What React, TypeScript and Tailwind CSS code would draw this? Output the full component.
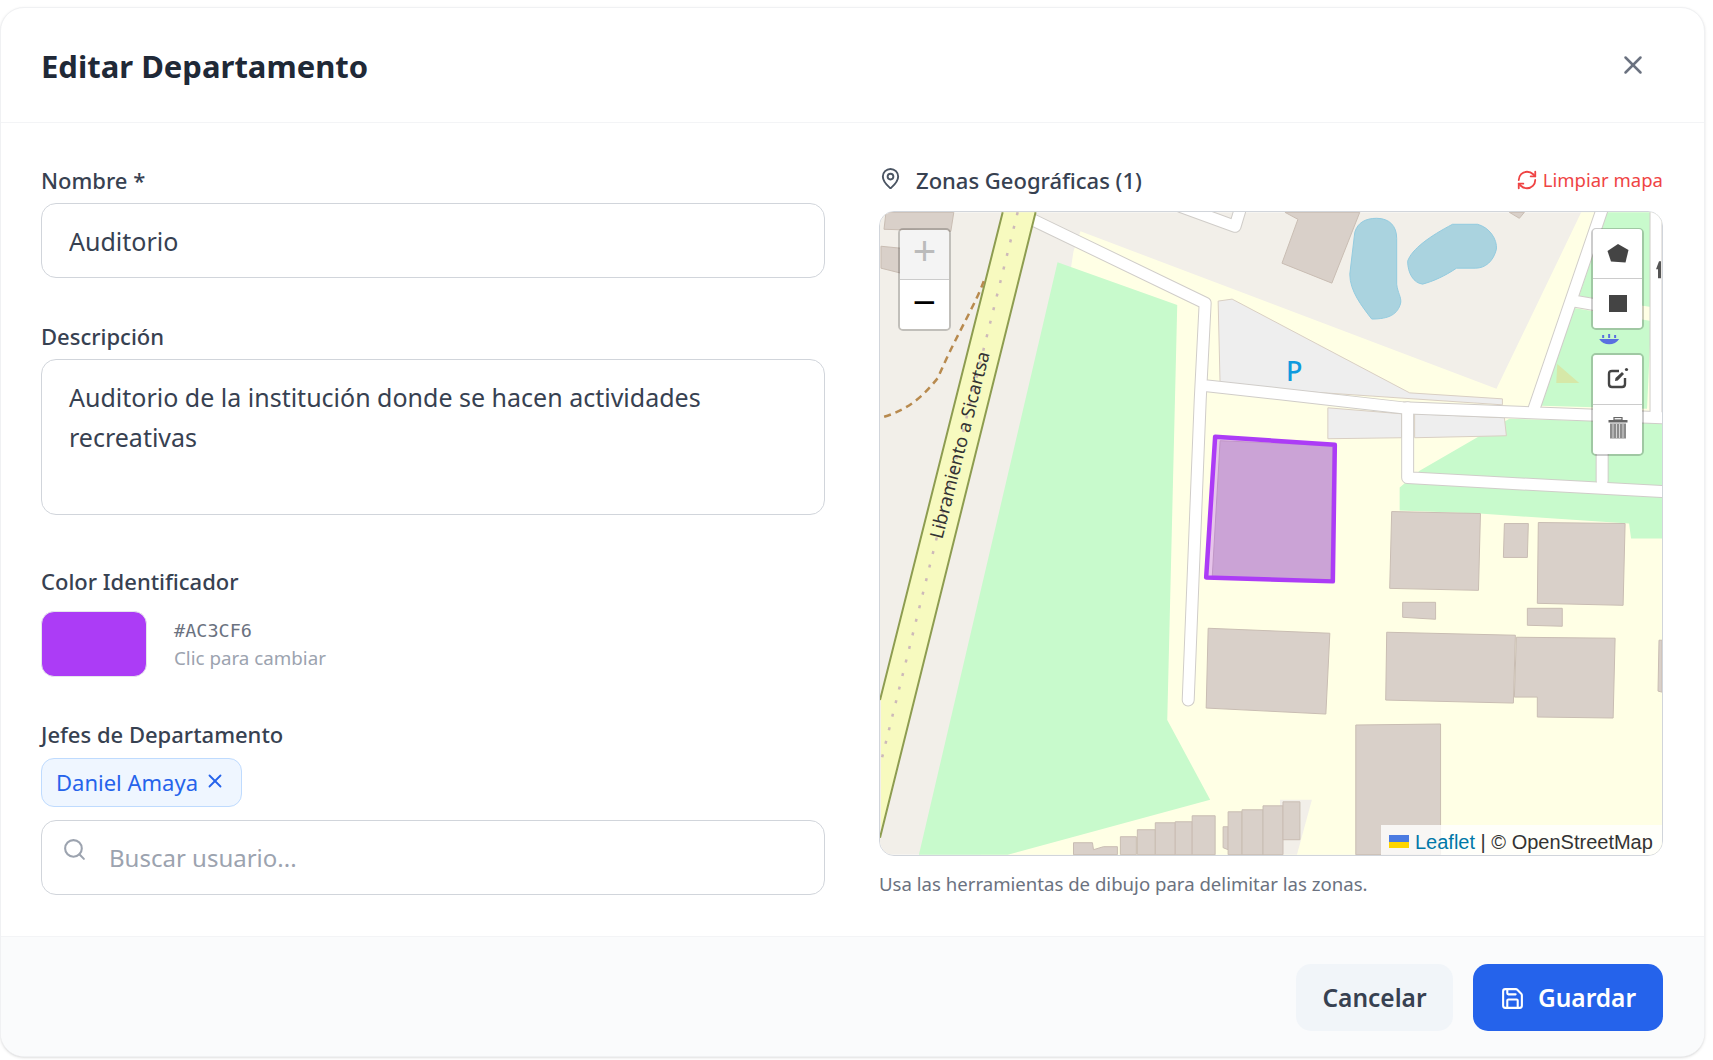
import { MapPin, RefreshCw, Save, Search, X } from "lucide-react";

const font = { fontFamily: '"Noto Sans", sans-serif' };

const buildings = [
  "885,211 953,211 950,230 883,228",
  "880,245 900,247 900,272 880,267",
  "1285,211 1360,211 1332,282 1282,262 1298,218",
  "1510,211 1525,211 1520,217",
  "1220,440 1333,445 1331,580 1212,578",
  "1392,511 1481,513 1479,590 1390,588",
  "1505,523 1529,523 1528,557 1504,557",
  "1539,522 1626,523 1624,605 1538,603",
  "1403,602 1436,602 1436,619 1403,617",
  "1528,608 1563,608 1563,626 1528,625",
  "1387,632 1516,635 1514,703 1386,700",
  "1517,637 1616,638 1614,718 1538,717 1538,697 1515,697",
  "1660,640 1663,640 1663,692 1659,691",
  "1208,628 1330,633 1326,714 1206,708",
  "1356,725 1441,724 1441,855 1356,855",
  "1073,843 1092,843 1093,850 1103,847 1117,847 1117,855 1073,855",
  "1120,837 1136,837 1136,855 1120,855",
  "1137,830 1155,830 1155,855 1137,855",
  "1155,823 1175,823 1175,855 1155,855",
  "1175,822 1192,822 1192,855 1175,855",
  "1192,816 1215,816 1215,855 1192,855",
  "1223,827 1228,827 1228,850 1223,848",
  "1228,812 1242,812 1242,855 1228,855",
  "1242,810 1263,810 1263,855 1242,855",
  "1263,806 1283,806 1283,855 1263,855",
  "1283,802 1300,802 1300,840 1283,840",
];

const parking = [
  "1218,300 1232,298 1410,392 1503,398 1503,404 1220,385",
  "1328,407 1402,413 1402,437 1328,438",
  "1415,413 1505,417 1507,435 1415,437",
];

const greens = [
  "1057,261 1177,304 1167,720 1210,800 1007,855 918,855",
  "1607,211 1652,211 1652,306 1580,295",
  "1575,307 1652,320 1648,408 1542,405",
  "1510,418 1663,422 1663,538 1632,538 1630,523 1480,513 1400,510 1400,487 1420,470",
];

const paths = [
  "M1033,219 L1205,302 L1200,400 L1188,700",
  "M1207,385 L1280,393 L1403,407 L1663,417",
  "M1408,407 L1408,477 L1663,491",
  "M1604,205 L1535,407",
  "M1575,300 L1610,306",
  "M1657,205 L1657,412",
  "M1603,417 L1603,480",
  "M1180,205 L1235,225 L1241,205",
];

function MapTiles() {
  return (
    <svg viewBox="879 211 784 644" className="block w-full h-full">
      <rect x="879" y="211" width="784" height="644" fill="#f2efe9" />
      <polygon points="1073,250 1080,230 1497,388 1582,211 1663,211 1663,855 980,855" fill="#ffffe5" />
      <polygon points="1280,855 1280,800 1312,800 1297,855" fill="#f2efe9" />
      {greens.map((p) => (
        <polygon key={p} points={p} fill="#c8facc" />
      ))}
      <polygon points="1558,363 1557,382 1580,382" fill="#d6e8a8" />
      {parking.map((p) => (
        <polygon key={p} points={p} fill="#eeeeee" stroke="#d9cfc3" strokeWidth="1" />
      ))}
      {/* water */}
      <path
        d="M1377,217 C1390,217 1397,225 1397,237 L1397,283 C1398,292 1402,296 1401,302 C1398,313 1390,318 1372,318 C1362,305 1350,290 1350,273 L1355,231 C1358,221 1366,217 1377,217 Z"
        fill="#aad3df"
        stroke="#93cbdf"
        strokeWidth="1"
      />
      <path
        d="M1408,260 C1412,248 1430,235 1453,223 L1478,223 C1490,226 1498,238 1497,248 C1494,260 1486,267 1476,267 L1457,267 C1445,275 1434,280 1423,283 C1414,282 1408,272 1408,260 Z"
        fill="#aad3df"
        stroke="#93cbdf"
        strokeWidth="1"
      />
      {buildings.map((p) => (
        <polygon key={p} points={p} fill="#d9d0c9" stroke="#c9bdb3" strokeWidth="1" />
      ))}
      {/* white service roads */}
      {paths.map((d) => (
        <path key={d} d={d} fill="none" stroke="#d0cdc9" strokeWidth="13" strokeLinecap="round" strokeLinejoin="round" />
      ))}
      {paths.map((d) => (
        <path key={d} d={d} fill="none" stroke="#ffffff" strokeWidth="11" strokeLinecap="round" strokeLinejoin="round" />
      ))}
      {/* main road */}
      <polygon points="1002,211 1035,211 880,835 880,697" fill="#f7fabf" />
      <path d="M1002,211 L879,700 M1035,211 L879,838" stroke="#8d9c50" strokeWidth="2" fill="none" />
      <path d="M1017,211 L879,766" stroke="#cdb9b9" strokeWidth="2.5" strokeDasharray="3 11" fill="none" />
      <path
        d="M983,280 C975,303 955,335 937,377 C925,392 910,408 883,416"
        stroke="#b88a4e"
        strokeWidth="2.5"
        strokeDasharray="7 5"
        fill="none"
      />
      <text
        x="958"
        y="444"
        transform="rotate(-75.7 958 444)"
        textAnchor="middle"
        dominantBaseline="central"
        fontSize="18.5"
        fill="#333333"
        style={font}
      >
        Libramiento a Sicartsa
      </text>
      <text x="1286" y="380" fontSize="27" fontWeight="500" fill="#0f9ade" style={font}>
        P
      </text>
      {/* fountain + arrow hidden behind the toolbar */}
      <path d="M1600,338 C1604,345 1616,345 1620,338 Z" fill="#5a6fe0" />
      <path d="M1604,334 L1604,337 M1610,333 L1610,337 M1616,334 L1616,337" stroke="#5a6fe0" strokeWidth="2" />
      <path d="M1660,260 L1657,268 L1659,268 L1659,277 L1662,277 L1662,260 Z" fill="#555555" />
      {/* drawn zone */}
      <polygon
        points="1215,436 1335,444 1333,581 1206,577"
        fill="#ac3cf6"
        fillOpacity="0.3"
        stroke="#ac3cf6"
        strokeWidth="4.5"
        strokeLinejoin="round"
      />
    </svg>
  );
}

function Label({ children, className }: { children: React.ReactNode; className?: string }) {
  return <label className={`block h-[24px] leading-[22px] text-[22px] font-medium text-[#374151] ${className}`}>{children}</label>;
}

function MapControls() {
  return (
    <>
      <div className="absolute left-[18px] top-[16px] w-[53px] rounded-[5px] border-[2.5px] border-[#00000033] bg-clip-padding">
        <div
          className="h-[50px] flex items-center justify-center bg-[#f4f4f4] text-[#bbbbbb] rounded-t-[3px] border-b border-[#cccccc] text-[40px]"
          style={{ fontFamily: '"Liberation Mono", monospace' }}
        >
          +
        </div>
        <div
          className="h-[49px] flex items-center justify-center bg-white text-black rounded-b-[3px] text-[40px] pt-[3px]"
          style={{ fontFamily: '"Liberation Mono", monospace' }}
        >
          −
        </div>
      </div>
      <div className="absolute right-[18px] top-[16px] w-[53px] rounded-[5px] border-[2.5px] border-[#00000033] bg-clip-padding">
        <div className="h-[50px] flex items-center justify-center bg-white rounded-t-[3px] border-b border-[#cccccc] -mt-[1px]">
          <svg width="22" height="20" viewBox="0 0 22 20">
            <polygon points="11,0 21.5,6 18.5,18.5 4,17.5 0.5,7" fill="#444444" />
          </svg>
        </div>
        <div className="h-[49px] flex items-center justify-center bg-white rounded-b-[3px]">
          <div className="w-[18px] h-[17px] bg-[#444444]" />
        </div>
      </div>
      <div className="absolute right-[18px] top-[141px] w-[53px] rounded-[5px] border-[2.5px] border-[#00000033] bg-clip-padding">
        <div className="h-[50px] flex items-center justify-center bg-white rounded-t-[3px] border-b border-[#cccccc]">
          <svg width="22" height="22" viewBox="0 0 22 22" fill="none" className="-mt-[3px]">
            <path d="M12,4 H5 Q2,4 2,7 V17 Q2,20 5,20 H15 Q18,20 18,17 V11" stroke="#444444" strokeWidth="2.4" />
            <path d="M8,14 L8.5,11 L15,5 L17,7 L10.8,13.5 Z" fill="#444444" />
            <circle cx="19.5" cy="2.5" r="1.6" fill="#444444" />
          </svg>
        </div>
        <div className="h-[49px] flex items-center justify-center bg-white rounded-b-[3px]">
          <svg width="20" height="22" viewBox="0 0 20 22" className="-mt-[3px]">
            <rect x="0.5" y="3" width="19" height="2.5" fill="#666666" />
            <rect x="6" y="0.5" width="8" height="2.5" fill="none" stroke="#666666" strokeWidth="1.2" />
            <rect x="2" y="6.5" width="16" height="15" fill="#8c8c8c" />
            <path d="M5,7 V21 M8.5,7 V21 M11.5,7 V21 M15,7 V21" stroke="#d6d6d6" strokeWidth="1" />
          </svg>
        </div>
      </div>
      <div
        className="absolute right-0 bottom-0 h-[30px] w-[281px] flex items-center pl-[8px] pt-[3px] gap-[6px] bg-[#ffffffcc] text-[20px] text-[#333333] rounded-br-[14px] whitespace-nowrap"
        style={{ fontFamily: '"Liberation Sans", sans-serif' }}
      >
        <span className="flex flex-col w-[20px] h-[13px]">
          <span className="h-[6.5px] bg-[#4c7be1]" />
          <span className="h-[6.5px] bg-[#ffd500]" />
        </span>
        <span>
          <span className="text-[#0078a8]">Leaflet</span> | © OpenStreetMap
        </span>
      </div>
    </>
  );
}

export default function App() {
  return (
    <div className="w-full h-screen bg-white pt-[7px] pr-[8px] pb-[3px]" style={font}>
      <div className="h-full flex flex-col rounded-[24px] border border-[#f0f1f3] bg-white overflow-hidden shadow-sm">
        {/* Header */}
        <div className="h-[115px] shrink-0 flex items-center justify-between pl-[40px] pr-[56px] border-b border-[#f3f4f6]">
          <h2 className="text-[31px] font-bold text-[#1f2937] leading-none mt-[3px]">Editar Departamento</h2>
          <X className="w-[30px] h-[30px] text-[#6b7280]" strokeWidth={2} />
        </div>

        {/* Body */}
        <div className="flex-1 grid grid-cols-2 gap-[54px] pl-[40px] pr-[41px] pt-[46px]">
          <div>
            <Label>Nombre *</Label>
            <input
              readOnly
              value="Auditorio"
              className="mt-[10px] w-full h-[75px] rounded-[15px] border border-[#d1d5db] pl-[27px] pr-[26px] text-[25px] text-[#374151] outline-none"
            />
            <Label className="mt-[47px]">Descripción</Label>
            <textarea
              readOnly
              value="Auditorio de la institución donde se hacen actividades recreativas"
              className="mt-[10px] block w-full h-[156px] rounded-[15px] border border-[#d1d5db] pl-[27px] pr-[26px] py-[17px] text-[25px] leading-[40px] text-[#374151] outline-none resize-none"
            />
            <Label className="mt-[55px]">Color Identificador</Label>
            <div className="mt-[17px] flex items-center gap-[27px]">
              <div className="w-[106px] h-[66px] rounded-[13px] bg-[#ac3cf6] border border-[#e5e7eb]" />
              <div>
                <div className="text-[18.5px] leading-[28px] text-[#6b7280]" style={{ fontFamily: '"DejaVu Sans Mono", monospace' }}>
                  #AC3CF6
                </div>
                <div className="text-[18.75px] leading-[26px] text-[#9ca3af]">Clic para cambiar</div>
              </div>
            </div>
            <Label className="mt-[46px]">Jefes de Departamento</Label>
            <div className="mt-[11px] flex items-center gap-[6px] h-[49px] w-[201px] rounded-[13px] border border-[#bfdbfe] bg-[#eff6ff] pl-[14px] text-[22px] text-[#2563eb]">
              Daniel Amaya
              <X className="w-[22px] h-[22px] -mt-[4px]" strokeWidth={2} />
            </div>
            <div className="relative mt-[13px]">
              <Search className="absolute left-[21px] top-[17px] w-[25px] h-[25px] text-[#9ca3af]" strokeWidth={2} />
              <input
                readOnly
                placeholder="Buscar usuario..."
                className="w-full h-[75px] rounded-[15px] border border-[#d1d5db] pl-[67px] pr-[16px] text-[24px] text-[#374151] placeholder:text-[#9ca3af] outline-none"
              />
            </div>
          </div>

          <div>
            <div className="h-[24px] flex items-center justify-between">
              <div className="flex items-center gap-[14px] text-[#374151]">
                <MapPin className="w-[23px] h-[23px] text-[#4b5563] -mt-[5px]" strokeWidth={2} />
                <span className="text-[22px] font-medium -mt-[2px]">Zonas Geográficas (1)</span>
              </div>
              <div className="flex items-center gap-[5px] text-[#ef4444] text-[18.5px] -mt-[2px]">
                <RefreshCw className="w-[22px] h-[22px]" strokeWidth={2} />
                Limpiar mapa
              </div>
            </div>
            <div className="relative mt-[18px] h-[645px] rounded-[15px] border border-[#d1d5db] overflow-hidden">
              <MapTiles />
              <MapControls />
            </div>
            <p className="mt-[16px] text-[18.6px] leading-[24px] text-[#6b7280]">
              Usa las herramientas de dibujo para delimitar las zonas.
            </p>
          </div>
        </div>

        {/* Footer */}
        <div className="h-[120px] shrink-0 flex items-start justify-end gap-[20px] pt-[27px] pr-[41px] bg-[#fafbfc] border-t border-[#f3f4f6]">
          <button className="w-[157px] h-[67px] rounded-[15px] bg-[#f1f5f9] text-[24.5px] font-semibold text-[#374151] pt-[2px]">
            Cancelar
          </button>
          <button className="w-[190px] h-[67px] rounded-[15px] bg-[#2563eb] text-[24.5px] font-semibold text-white flex items-center justify-center gap-[13px] pt-[2px]">
            <Save className="w-[25px] h-[25px]" strokeWidth={2} />
            Guardar
          </button>
        </div>
      </div>
    </div>
  );
}
